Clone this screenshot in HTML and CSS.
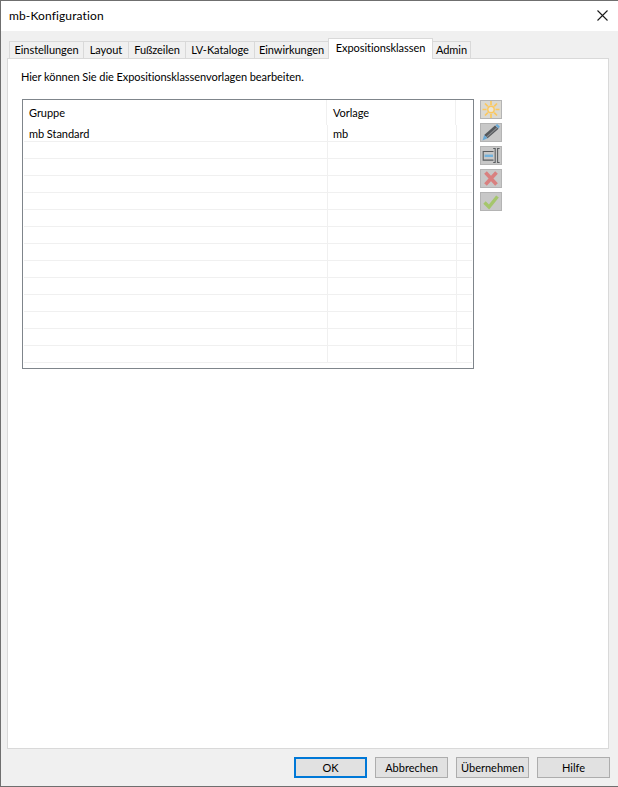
FILE: index.html
```html
<!DOCTYPE html>
<html lang="de">
<head>
  <meta charset="UTF-8">
  <title>mb-Konfiguration</title>
  <link rel="stylesheet" href="styles.css">
</head>
<body>
  <div class="window">
    <div class="titlebar">
      <span class="title">mb-Konfiguration</span>
      <svg class="close" width="11" height="11" viewBox="0 0 11 11"><path d="M0.5 0.5 L10.5 10.5 M10.5 0.5 L0.5 10.5" stroke="#1a1a1a" stroke-width="1.1" fill="none"/></svg>
    </div>
    <div class="content">
      <div class="tabs">
        <div class="tab t1">Einstellungen</div>
        <div class="tab t2">Layout</div>
        <div class="tab t3">Fußzeilen</div>
        <div class="tab t4">LV-Kataloge</div>
        <div class="tab t5">Einwirkungen</div>
        <div class="tab active t6">Expositionsklassen</div>
        <div class="tab t7">Admin</div>
      </div>
      <div class="panel">
        <p class="hint">Hier können Sie die Expositionsklassenvorlagen bearbeiten.</p>
        <div class="editor">
          <div class="table">
            <div class="row head"><div class="c1">Gruppe</div><div class="c2">Vorlage</div><div class="c3"></div></div>
            <div class="row first"><div class="c1">mb Standard</div><div class="c2">mb</div><div class="c3"></div></div>
            <div class="row"><div class="c1"></div><div class="c2"></div><div class="c3"></div></div>
            <div class="row"><div class="c1"></div><div class="c2"></div><div class="c3"></div></div>
            <div class="row"><div class="c1"></div><div class="c2"></div><div class="c3"></div></div>
            <div class="row"><div class="c1"></div><div class="c2"></div><div class="c3"></div></div>
            <div class="row"><div class="c1"></div><div class="c2"></div><div class="c3"></div></div>
            <div class="row"><div class="c1"></div><div class="c2"></div><div class="c3"></div></div>
            <div class="row"><div class="c1"></div><div class="c2"></div><div class="c3"></div></div>
            <div class="row"><div class="c1"></div><div class="c2"></div><div class="c3"></div></div>
            <div class="row"><div class="c1"></div><div class="c2"></div><div class="c3"></div></div>
            <div class="row"><div class="c1"></div><div class="c2"></div><div class="c3"></div></div>
            <div class="row"><div class="c1"></div><div class="c2"></div><div class="c3"></div></div>
            <div class="row"><div class="c1"></div><div class="c2"></div><div class="c3"></div></div>
            <div class="row"><div class="c1"></div><div class="c2"></div><div class="c3"></div></div>
          </div>
          <div class="tools">
            <div class="tool sun">
              <svg class="sun-icon" width="18" height="17" viewBox="0 0 18 17"><g stroke="#fbc85e" stroke-width="1.7" fill="none"><circle cx="9" cy="8.5" r="3.2" fill="#ebe6d8" stroke-width="1.4"/><path d="M9 0v4M9 13v4M0.5 8.5h4M13.5 8.5h4M3 2.5l2.8 2.8M12.2 11.7l2.8 2.8M15 2.5l-2.8 2.8M5.8 11.7l-2.8 2.8"/></g></svg>
            </div>
            <div class="tool">
              <svg width="20" height="17" viewBox="0 0 20 17"><path d="M14 1.5 L17.6 4.8 L6.6 14.2 L3.2 11 Z" fill="#55585c"/><path d="M15.8 3.2 L16.6 3.9 L5.9 13.5 L5.1 12.8 Z" fill="#8b8d90"/><path d="M14.4 1.2 L16.2 0 L18.8 2.6 L17.6 4.4 Z" fill="#6aa9d6"/><path d="M3.2 11 L6.6 14.2 L1.5 16.6 Z" fill="#6aa9d6"/></svg>
            </div>
            <div class="tool">
              <svg width="18" height="17" viewBox="0 0 18 17"><g fill="none" stroke="#5a5d60" stroke-width="1.1"><path d="M11.5 4.5H1.2v8.6H11.5"/><path d="M11.2 1.5h2v14h-2M17.6 1.5h-2v14h2"/></g><rect x="2.6" y="7.6" width="8.4" height="2.4" fill="#72b2dd"/></svg>
            </div>
            <div class="tool">
              <svg width="18" height="17" viewBox="0 0 18 17"><path d="M3.5 2.5 L14.5 14.5 M14.5 2.5 L3.5 14.5" stroke="#d9807f" stroke-width="3.6" fill="none"/></svg>
            </div>
            <div class="tool">
              <svg width="18" height="17" viewBox="0 0 18 17"><path d="M2.5 9.5 L7 14 L15.5 3.5" stroke="#a5c66c" stroke-width="3.4" fill="none"/></svg>
            </div>
          </div>
        </div>
      </div>
    </div>
    <div class="footer">
      <button class="btn default">OK</button>
      <button class="btn">Abbrechen</button>
      <button class="btn">Übernehmen</button>
      <button class="btn">Hilfe</button>
    </div>
  </div>
</body>
</html>
```

FILE: styles.css
```css
html, body { margin: 0; padding: 0; height: 100%; }
body { font-family: Lato, "Liberation Sans", sans-serif; font-size: 11px; letter-spacing: -0.05px; color: #000; overflow: hidden; }

.window {
  height: 787px;
  box-sizing: border-box;
  border: 1px solid #6f6f6f;
  border-right: none;
  background: #f0f0f0;
  display: flex;
  flex-direction: column;
}

.titlebar {
  height: 30px;
  background: #fff;
  display: flex;
  align-items: center;
  justify-content: space-between;
  padding: 0 10px 2px 8px;
  box-sizing: border-box;
  flex: none;
}
.title { font-size: 12px; letter-spacing: 0.12px; }

.content { flex: 1; padding: 9px 9px 0 6px; display: flex; flex-direction: column; }

.tabs { display: flex; height: 18px; padding-left: 2px; align-items: flex-end; position: relative; z-index: 1; }
.tab {
  box-sizing: border-box;
  height: 17px;
  border: 1px solid #d9d9d9;
  border-bottom: none;
  margin-left: -1px;
  text-align: center;
  line-height: 16px;
  background: #f0f0f0;
}
.tab.active {
  height: 21px;
  background: #fff;
  margin-bottom: -1px;
  line-height: 18px;
}
.t1 { width: 75px; margin-left: 0; }
.t2 { width: 46px; }
.t3 { width: 58px; }
.t4 { width: 70px; }
.t5 { width: 75px; }
.t6 { width: 105px; }
.t7 { width: 39px; }

.panel {
  flex: 1;
  background: #fff;
  border: 1px solid #d9d9d9;
  padding: 11px 13px 11px 14px;
}
.hint { margin: 0 0 15px -1px; line-height: 14px; }

.editor { display: flex; align-items: flex-start; gap: 6px; }

.table {
  width: 452px;
  height: 270px;
  box-sizing: border-box;
  border: 1px solid #7f858b;
  overflow: hidden;
}
.row { display: flex; height: 17px; box-sizing: border-box; border-bottom: 1px solid #f0f0f0; margin-right: 1px; margin-left: 1px; }
.row.head { height: 25px; border-bottom: none; line-height: 26px; }
.row.first { line-height: 18px; }
.c1 { width: 304px; padding-left: 5px; box-sizing: border-box; border-right: 1px solid #f0f0f0; }
.c2 { width: 129px; padding-left: 5px; box-sizing: border-box; border-right: 1px solid #f0f0f0; }
.c3 { flex: 1; }
.head .c1 { width: 303px; }
.head .c2 { padding-left: 6px; }

.tools { display: flex; flex-direction: column; gap: 4px; margin-top: 1px; }
.tool {
  width: 22px;
  height: 19px;
  box-sizing: border-box;
  background: #c8c8c8;
  border: 1px solid #b4b4b4;
  display: flex;
  align-items: center;
  justify-content: center;
}
.tool.sun { background: #dbd9d2; }

.footer {
  height: 37px;
  flex: none;
  display: flex;
  justify-content: flex-end;
  align-items: flex-start;
  gap: 8px;
  padding: 8px 8px 0 0;
  box-sizing: border-box;
}
.btn {
  width: 73px;
  height: 21px;
  box-sizing: border-box;
  font: 11px Lato, "Liberation Sans", sans-serif;
  background: #e1e1e1;
  border: 1px solid #adadad;
  padding: 0;
}
.btn.default { border: 2px solid #0078d7; }
```
